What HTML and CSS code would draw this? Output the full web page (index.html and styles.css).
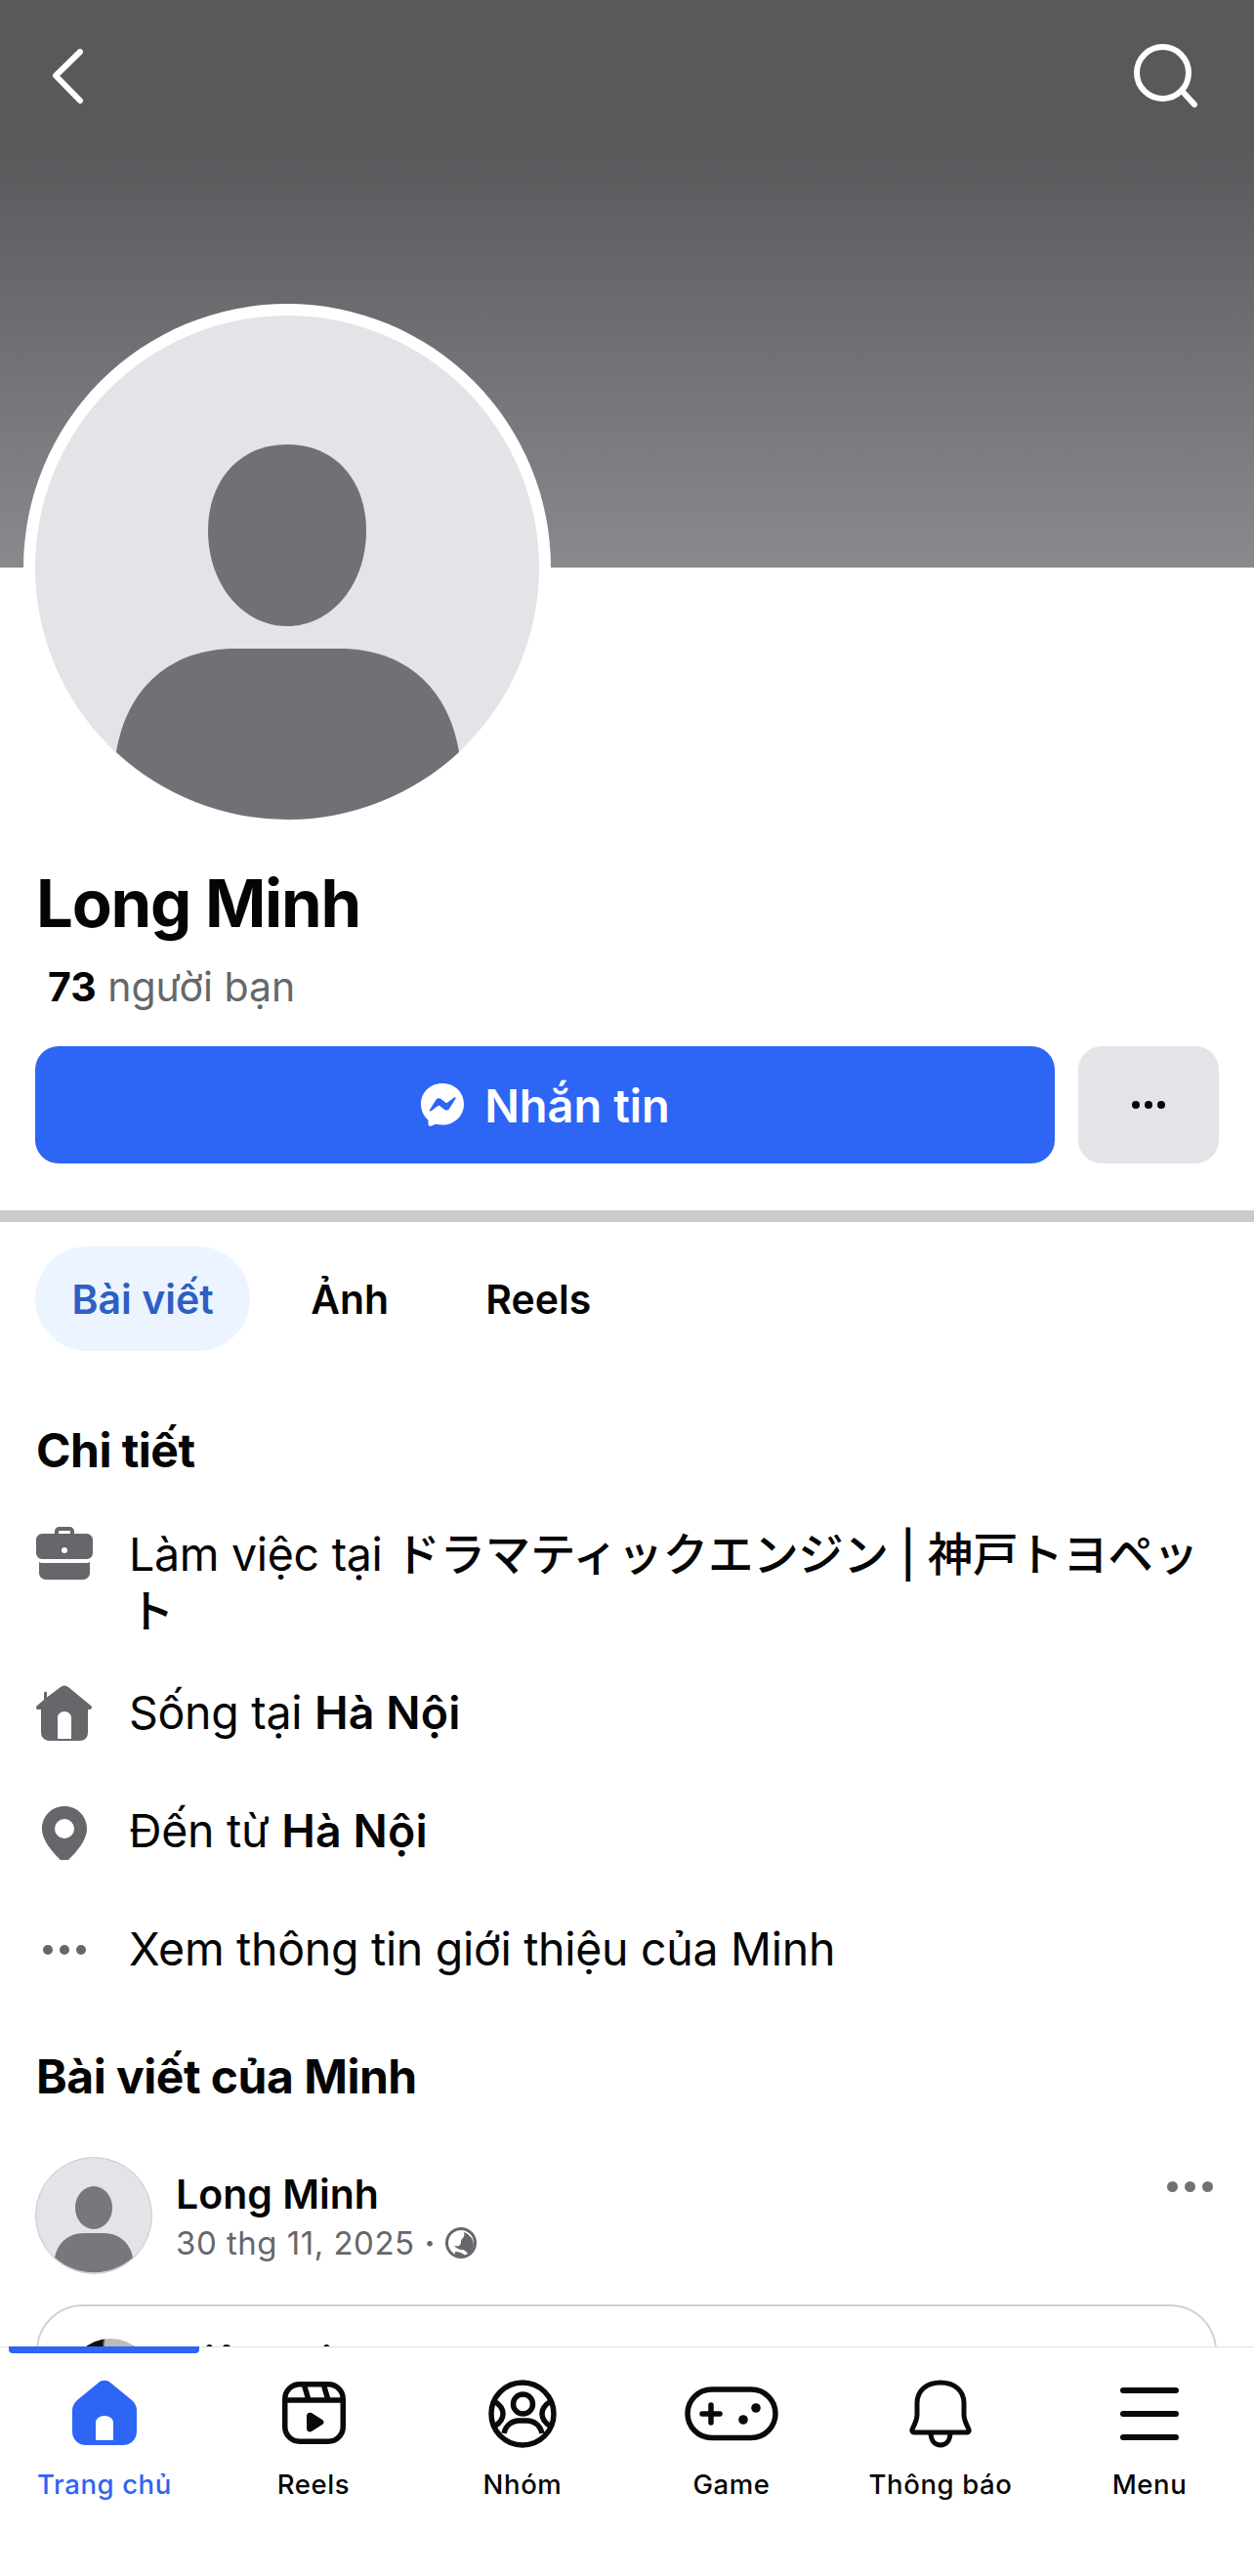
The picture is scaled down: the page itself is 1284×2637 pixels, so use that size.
FILE: index.html
```html
<!DOCTYPE html>
<html lang="vi">
<head>
<meta charset="utf-8">
<title>Long Minh</title>
<link rel="stylesheet" href="styles.css">
</head>
<body>
<div class="page">
  <header class="cover">
    <div class="top-bar">
      <svg class="back-icon" viewBox="0 0 34 56"><path d="M28 3 3 27.500 28 53" fill="none" stroke="#fff" stroke-width="6" stroke-linecap="round" stroke-linejoin="round"/></svg>
      <svg class="search-icon" viewBox="0 0 70 70"><circle cx="32.500" cy="32.500" r="26.500" fill="none" stroke="#fff" stroke-width="6"/><path d="m54 53 11 12" fill="none" stroke="#fff" stroke-width="6" stroke-linecap="round"/></svg>
    </div>
    <div class="big-avatar">
      <svg viewBox="0 0 516 516"><circle cx="258" cy="258" r="258" fill="#e3e4e8"/><path d="M258 132c52 0 81 40 81 88 0 56-36 98-81 98s-81-42-81-98c0-48 29-88 81-88z" fill="#707175"/><path d="M83 447c10-62 52-106 122-106h107c70 0 112 44 122 106a258 258 0 0 1-351 0z" fill="#707175"/></svg>
    </div>
  </header>

  <section class="identity">
    <h1 class="name">Long Minh</h1>
    <p class="friends"><b>73</b> người bạn</p>
    <div class="actions">
      <button class="btn-primary">
        <svg class="msg-icon" viewBox="0 0 46 46"><path d="M23 1C10.600 1 1 10.100 1 22.300c0 6.400 2.600 11.900 6.900 15.700.7.600.6 1.100.7 5 0 1.400 1.400 2.200 2.700 1.700 4.400-1.900 4.500-2.100 5.200-1.900 2 .5 4.100.8 6.500.8 12.400 0 22-9.100 22-21.300S35.400 1 23 1z" fill="#fff"/><path d="m10 28 6.500-10.300c1-1.600 3.200-2 4.700-.9l5.200 3.900c.5.400 1.100.4 1.600 0l7-5.300c.9-.7 2.200.4 1.500 1.400L30 27c-1 1.600-3.200 2-4.700.9l-5.200-3.900c-.5-.4-1.100-.4-1.600 0l-7 5.300c-.9.700-2.100-.3-1.500-1.300z" fill="#2d65f4"/></svg>
        <span>Nhắn tin</span>
      </button>
      <button class="btn-more" aria-label="Thêm"><i></i><i></i><i></i></button>
    </div>
  </section>

  <nav class="tabs">
    <span class="tab active">Bài viết</span>
    <span class="tab">Ảnh</span>
    <span class="tab">Reels</span>
  </nav>

  <section class="details">
    <h2 class="heading">Chi tiết</h2>
    <ul class="detail-list">
      <li class="detail">
        <svg class="detail-icon" viewBox="0 2 58 58"><path d="M19 8c0-3 2-5 5-5h10c3 0 5 2 5 5v3h-4V8c0-.6-.4-1-1-1H24c-.6 0-1 .4-1 1v3h-4z" fill="#65676b"/><path d="M6 10h46c3 0 6 3 6 6v14c0 3-3 6-6 6H6c-3 0-6-3-6-6V16c0-3 3-6 6-6z" fill="#65676b"/><circle cx="29" cy="27" r="3" fill="#fff"/><path d="M3 39c1 .5 2 1 3 1h46c1 0 2-.5 3-1v11c0 4-3 7-7 7H10c-4 0-7-3-7-7z" fill="#65676b"/></svg>
        <span class="detail-text">Làm việc tại <b class="work">ドラマティックエンジン | 神戸トヨペット</b></span>
      </li>
      <li class="detail">
        <svg class="detail-icon" viewBox="0 0 58 58"><path fill-rule="evenodd" d="M25 2c2.500-2 5.500-2 8 0l23 19c2 2 1 4-2 4h-1v23c0 6-3 9-9 9H14c-5 0-9-3-9-9V25H3c-3 0-4-2-2-4l7-6V8c0-1.500 3-1.500 3-.5v5zM22 33v22h14V33c0-3-3-6-7-6s-7 3-7 6z" fill="#65676b"/></svg>
        <span class="detail-text">Sống tại <b>Hà Nội</b></span>
      </li>
      <li class="detail">
        <svg class="detail-icon" viewBox="0 -3 58 58"><path fill-rule="evenodd" d="M29 0C16 0 6 10 6 23c0 14 15 28 20 33 2 2 4 2 6 0 5-5 20-19 20-33C52 10 42 0 29 0zm0 13a10 10 0 1 1 0 20 10 10 0 0 1 0-20z" fill="#65676b"/></svg>
        <span class="detail-text">Đến từ <b>Hà Nội</b></span>
      </li>
      <li class="detail">
        <span class="detail-dots"><i></i><i></i><i></i></span>
        <span class="detail-text">Xem thông tin giới thiệu của Minh</span>
      </li>
    </ul>
  </section>

  <section class="posts">
    <h2 class="heading">Bài viết của Minh</h2>
    <article class="post">
      <div class="post-head">
        <svg class="small-avatar" viewBox="0 0 120 120"><circle cx="60" cy="60" r="59.500" fill="#e3e4e8" stroke="#c9cacd"/><ellipse cx="60" cy="52" rx="19" ry="22" fill="#77787b"/><path d="M20 103c3-15 14-25 30-25h20c16 0 27 10 30 25a60 60 0 0 1-80 0z" fill="#77787b"/></svg>
        <div class="post-meta">
          <div class="post-name">Long Minh</div>
          <div class="post-date">30 thg 11, 2025 <span class="sep">·</span>
            <svg class="globe" viewBox="0 0 32 32"><circle cx="16" cy="16" r="14.500" fill="#fff" stroke="#65676b" stroke-width="3"/><path d="M19 5c3 1 7 4 9 8l1 5c-1 5-3 8-6 9-2-2-3-4-6-4-3 0-6-2-8-4 3 0 5 1 6-1 2-2 0-4 2-6 2-2 3-3 2-7z" fill="#65676b"/><path d="M10 25c3 0 8 1 10 4-3 1-7 1-10-1z" fill="#65676b"/></svg>
          </div>
        </div>
        <span class="post-more"><i></i><i></i><i></i></span>
      </div>
      <div class="shared">
        <div class="shared-head">
          <span class="shared-avatar"></span>
          <span class="shared-name">Tiệm Minh</span>
        </div>
      </div>
    </article>
  </section>

  <footer class="bottom-nav">
    <span class="progress"></span>
    <div class="nav-item active">
      <svg class="nav-icon" viewBox="0 0 70 70"><path fill-rule="evenodd" d="M29 3c3-3 9-3 12 0l22 18c3 3 5 6 5 10v22c0 8-6 14-14 14H16C8 67 2 61 2 53V31c0-4 2-7 5-10zM26 62h18V44c0-4-4-7-9-7s-9 3-9 7z" fill="#2d65f4"/></svg>
      <span>Trang chủ</span>
    </div>
    <div class="nav-item">
      <svg class="nav-icon" viewBox="0 0 70 70"><g fill="none" stroke="#0a0a0a" stroke-width="5.500"><rect x="5.750" y="4.750" width="59.500" height="58.500" rx="15"/><path d="M5 21h60M25 4l5 17M45 4l5 17"/></g><path d="M28 37c0-3 3-4 5-3l11 7c2 1 2 4 0 5l-11 7c-2 1-5 0-5-3z" fill="#0a0a0a"/></svg>
      <span>Reels</span>
    </div>
    <div class="nav-item">
      <svg class="nav-icon" viewBox="0 0 70 70"><g fill="none" stroke="#0a0a0a" stroke-width="5.500"><circle cx="35" cy="35" r="32"/><circle cx="35.500" cy="25" r="10"/><path d="M16 55c2-9 9-13 15-13h9c6 0 13 4 15 13"/><path d="M6 22c5 3 9 8 9 13s-4 10-9 13M64 22c-5 3-9 8-9 13s4 10 9 13"/></g></svg>
      <span>Nhóm</span>
    </div>
    <div class="nav-item">
      <svg class="nav-icon" viewBox="0 0 96 70"><rect x="3" y="10" width="90" height="49.500" rx="24.750" fill="none" stroke="#0a0a0a" stroke-width="5.500"/><path d="M27 26v18M18 35h18" stroke="#0a0a0a" stroke-width="5.500" stroke-linecap="round"/><circle cx="73" cy="29" r="4.800" fill="#0a0a0a"/><circle cx="60" cy="41" r="4.800" fill="#0a0a0a"/></svg>
      <span>Game</span>
    </div>
    <div class="nav-item">
      <svg class="nav-icon" viewBox="0 0 70 70"><path d="M11 36V24C11 11 21 3 35 3s24 8 24 21v12c0 5 2 9 5 15 .5 1 0 3-2 3H8c-2 0-2.500-2-2-3 3-6 5-10 5-15zM25 54c0 8 4 13 10 13s10-5 10-13" fill="none" stroke="#0a0a0a" stroke-width="5" stroke-linejoin="round"/></svg>
      <span>Thông báo</span>
    </div>
    <div class="nav-item">
      <svg class="nav-icon" viewBox="0 0 70 70"><path d="M8 11h54M8 35h54M8 59h54" stroke="#0a0a0a" stroke-width="6" stroke-linecap="round"/></svg>
      <span>Menu</span>
    </div>
  </footer>
</div>
</body>
</html>
```

FILE: styles.css
```css
* { box-sizing: border-box; }
html, body { margin: 0; padding: 0; background: #fff; }
body {
  font-family: Inter, "Noto Sans CJK JP", "Liberation Sans", sans-serif;
  color: #050505;
}
.page { position: relative; width: 1284px; height: 2637px; overflow: hidden; }

.cover {
  position: relative;
  height: 581px;
  background: linear-gradient(#58595b 0, #58595b 148px, #888a8e 100%);
  padding: 42px 56px 0 54px;
}
.top-bar { display: flex; justify-content: space-between; align-items: flex-start; }
.back-icon { width: 34px; height: 56px; margin-top: 8px; }
.search-icon { width: 70px; height: 70px; }
.big-avatar {
  position: absolute;
  left: 24px;
  top: 311px;
  width: 540px;
  height: 540px;
  border-radius: 50%;
  background: #fff;
  padding: 12px;
}
.big-avatar svg { display: block; width: 516px; height: 516px; }

.identity { padding: 303px 36px 0; }
.name { margin: 0; font-size: 67px; line-height: 82px; font-weight: 700; letter-spacing: -1.2px; padding-left: 1px; }
.friends { margin: 19px 0 0 13px; font-size: 41px; line-height: 50px; color: #65676b; }
.friends b { color: #050505; font-weight: 700; }
.actions { display: flex; gap: 24px; margin-top: 36px; }
.btn-primary {
  flex: 1;
  height: 120px;
  border: 0;
  border-radius: 24px;
  background: #2d65f4;
  color: #fff;
  font: 600 47px/1 Inter, sans-serif;
  display: flex;
  align-items: center;
  justify-content: center;
  gap: 20px;
}
.msg-icon { width: 46px; height: 46px; }
.btn-more {
  width: 144px;
  height: 120px;
  border: 0;
  border-radius: 24px;
  background: #e3e4e8;
  display: flex;
  align-items: center;
  justify-content: center;
  gap: 5px;
}
.btn-more i { width: 8px; height: 8px; border-radius: 50%; background: #050505; }

.tabs {
  margin-top: 48px;
  border-top: 12px solid #cacbcf;
  padding: 25px 36px 0;
  display: flex;
  gap: 25px;
}
.tab { height: 107px; padding: 0 37px; display: flex; align-items: center; font-size: 41px; font-weight: 600; border-radius: 54px; }
.tab.active { background: #ebf4ff; color: #2d5fc4; padding: 0 37.500px; }

.heading { margin: 0; font-size: 48px; line-height: 60px; font-weight: 700; letter-spacing: -.5px; padding-left: 1px; }
.details { padding: 72px 36px 0; }
.detail-list { list-style: none; margin: 47px 0 0; padding: 0; }
.detail { display: flex; gap: 37px; font-size: 46.5px; line-height: 57px; padding-bottom: 63px; }
.detail:first-child { line-height: 58px; padding-bottom: 47px; }
.detail:last-child { padding-bottom: 0; }
.detail-icon { flex: none; width: 58px; height: 58px; margin-left: 1px; }
.detail-text { flex: 1; letter-spacing: -.3px; }
.detail-text b { font-weight: 600; letter-spacing: .1px; }
.detail-text .work { font-weight: 500; letter-spacing: -.3px; }
.detail-dots { flex: none; width: 58px; margin-left: 1px; height: 57px; display: flex; align-items: center; justify-content: center; gap: 7px; }
.detail-dots i { width: 10px; height: 10px; border-radius: 50%; background: #65676b; }

.posts { padding: 72px 36px 0; }
.post { margin-top: 52px; }
.post-head { display: flex; align-items: flex-start; gap: 24px; position: relative; }
.small-avatar { flex: none; width: 120px; height: 120px; }
.post-meta { padding-top: 13px; }
.post-name { font-size: 41px; line-height: 50px; font-weight: 600; }
.post-date { margin-top: 3px; font-size: 33px; line-height: 44px; color: #65676b; display: flex; align-items: center; gap: 10px; letter-spacing: .5px; }
.sep { font-weight: 700; }
.globe { width: 32px; height: 32px; }
.post-more { position: absolute; right: 6px; top: 25px; display: flex; gap: 7px; }
.post-more i { width: 11px; height: 11px; border-radius: 50%; background: #707175; }
.shared {
  margin: 31px 2px 0 1px;
  height: 200px;
  border: 2px solid #d0d1d4;
  border-radius: 48px;
  padding: 33px 0 0 31px;
}
.shared-head { display: flex; gap: 26px; }
.shared-avatar { width: 86px; height: 86px; border-radius: 50%; background: radial-gradient(circle at 60% 7%, #bbb 0 14px, #111 17px); }
.shared-name { font-size: 41px; line-height: 50px; font-weight: 600; margin-top: -2px; }

.bottom-nav {
  position: absolute;
  left: 0;
  right: 0;
  bottom: 0;
  height: 235px;
  background: #fff;
  border-top: 1px solid #e0e0e2;
  display: grid;
  grid-template-columns: repeat(6, 214px);
  padding-top: 33px;
}
.progress {
  position: absolute;
  left: 9px;
  top: -1px;
  width: 195px;
  height: 7px;
  background: #2d65f4;
  border-radius: 0 0 4px 4px;
}
.nav-item { display: flex; flex-direction: column; align-items: center; font-size: 27.5px; line-height: 34px; font-weight: 500; letter-spacing: .6px; gap: 20px; }
.nav-item.active { color: #2d65f4; }
.nav-icon { height: 70px; width: auto; display: block; }
```
